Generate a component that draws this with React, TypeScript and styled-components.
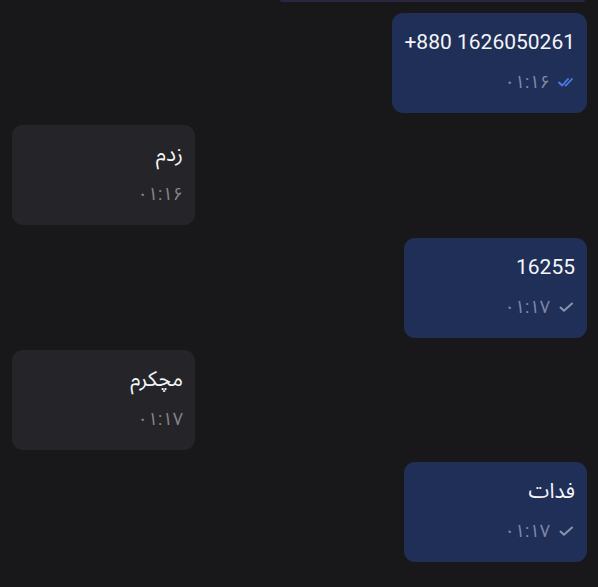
import React from 'react';
import styled, { createGlobalStyle } from 'styled-components';

const GlobalStyle = createGlobalStyle`
  html, body {
    margin: 0;
    padding: 0;
    background: #18181b;
  }
  body {
    font-family: Roboto, "Noto Sans Arabic", "Vazirmatn", "DejaVu Sans", sans-serif;
  }
`;

const Chat = styled.div`
  display: flex;
  flex-direction: column;
  gap: 12.25px;
  padding: 0 11px 0 12px;
  height: 587px;
  overflow: hidden;
  box-sizing: border-box;
`;

const CutBubble = styled.div`
  align-self: flex-end;
  width: 305px;
  height: 2px;
  margin-right: 2px;
  margin-bottom: -1.25px;
  background: #2a2640;
  border-radius: 0 0 6px 6px;
`;

const Row = styled.div<{ $out: boolean }>`
  display: flex;
  justify-content: ${p => (p.$out ? 'flex-end' : 'flex-start')};
`;

const Bubble = styled.div<{ $out: boolean }>`
  box-sizing: border-box;
  min-width: 183px;
  height: 100px;
  padding: 15px 12px 0 12px;
  border-radius: 11px;
  background: ${p => (p.$out ? '#1f2f57' : '#252429')};
  display: flex;
  flex-direction: column;
  align-items: flex-end;
`;

const Text = styled.div`
  color: #f4f5f8;
  font-size: 21px;
  line-height: 29px;
  white-space: nowrap;
`;

const Meta = styled.div<{ $out: boolean }>`
  margin-top: 14px;
  display: flex;
  align-items: center;
  gap: 8px;
  height: 22px;
  color: ${p => (p.$out ? '#7f89a8' : '#85858b')};
  font-size: 18px;
  direction: ltr;
`;

const Time = styled.span`
  line-height: 22px;
`;

const Check = ({ double, color }: { double?: boolean; color: string }) => (
  <svg width="17" height="12" viewBox="0 0 17 12" fill="none">
    {double ? (
      <>
        <path d="M1 6.5 L4.2 9.5 L10 3" stroke={color} strokeWidth="1.8" strokeLinecap="round" strokeLinejoin="round" />
        <path d="M7.5 9.2 L7.9 9.5 L14 3" stroke={color} strokeWidth="1.8" strokeLinecap="round" strokeLinejoin="round" />
      </>
    ) : (
      <path d="M2.5 6.5 L6 9.8 L14 2.5" stroke={color} strokeWidth="2" strokeLinecap="round" strokeLinejoin="round" />
    )}
  </svg>
);

type Msg = { text: string; time: string; out: boolean; read?: boolean };

const messages: Msg[] = [
  { text: '+880 1626050261', time: '۰۱:۱۶', out: true, read: true },
  { text: 'زدم', time: '۰۱:۱۶', out: false },
  { text: '16255', time: '۰۱:۱۷', out: true },
  { text: 'مچکرم', time: '۰۱:۱۷', out: false },
  { text: 'فدات', time: '۰۱:۱۷', out: true },
];

export default function App() {
  return (
    <>
      <GlobalStyle />
      <Chat>
        <CutBubble />
        {messages.map((m, i) => (
          <Row key={i} $out={m.out}>
            <Bubble $out={m.out}>
              <Text>{m.text}</Text>
              <Meta $out={m.out}>
                <Time>{m.time}</Time>
                {m.out && <Check double={m.read} color={m.read ? '#4a7cf0' : '#8a93ad'} />}
              </Meta>
            </Bubble>
          </Row>
        ))}
      </Chat>
    </>
  );
}
